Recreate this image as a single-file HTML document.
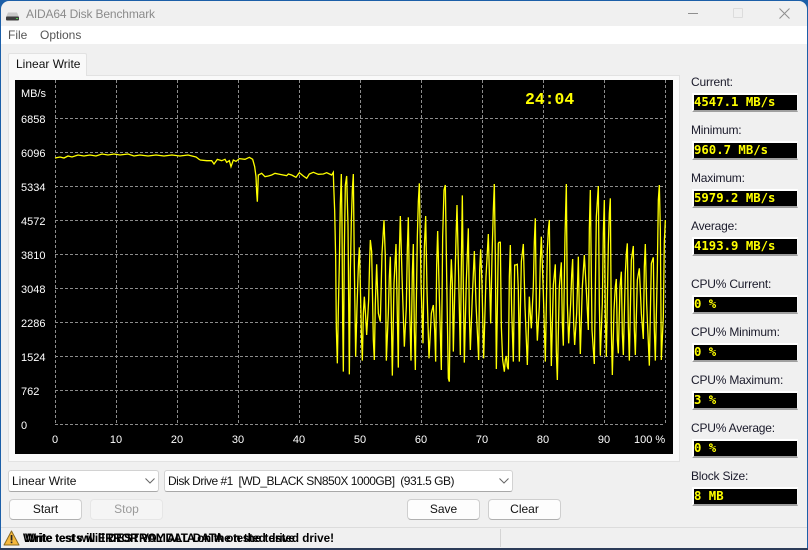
<!DOCTYPE html>
<html><head><meta charset="utf-8"><title>AIDA64 Disk Benchmark</title>
<style>
html,body{margin:0;padding:0;width:808px;height:550px;overflow:hidden;background:#1c5fa8}
body{position:relative;font-family:"Liberation Sans",sans-serif;font-size:12px;color:#111}
div{position:absolute;box-sizing:border-box;white-space:pre}
#win{left:1px;top:1px;width:806px;height:547px;background:#f0f0f0;border-radius:8px 8px 0 0;overflow:hidden}
#bot{left:0;top:548px;width:808px;height:2px;background:#2b3b58}
.abs{position:absolute}
.lbl{left:691px;color:#1a1a2a;font-size:12px;line-height:14px;letter-spacing:-.2px}
.val{left:692px;width:106px;height:19px;background:#000;border:2px solid #fff;border-bottom:2px solid #a0a0a0;border-right:1px solid #f6f6f6;color:#ff0;font:bold 12.3px/15px "DejaVu Sans Mono","Liberation Mono",monospace;padding-left:0}
.btn{height:21px;width:73px;background:#fdfdfd;border:1px solid #cfcfcf;border-bottom-color:#b0b0b0;border-radius:4px;text-align:center;line-height:19px;font-size:12px;color:#111}
.combo{height:22px;top:470px;background:#fff;border:1px solid #d2d2d2;border-bottom-color:#a8a8a8;border-radius:3px;line-height:20px;padding-left:3px;font-size:12px}
.warn{left:23px;top:532px;font-weight:bold;font-size:11.7px;line-height:14px;color:#000}
</style></head><body>
<div id="win"></div>
<div id="bot"></div>

<!-- title bar -->
<svg class="abs" style="left:5px;top:11px" width="16" height="10" viewBox="0 0 16 10"><path d="M3 1.5h9l2 4.5H1z" fill="#c9c9c9"/><rect x="1" y="5.5" width="13" height="4" rx="1" fill="#3e3e3e"/><rect x="11" y="7" width="2" height="1" fill="#4fd04f"/></svg>
<div style="left:26px;top:6px;font-size:12px;line-height:16px;color:#8b8b8b;letter-spacing:-.15px">AIDA64 Disk Benchmark</div>
<div style="left:688px;top:13px;width:10px;height:1px;background:#8f8f8f"></div>
<div style="left:733px;top:8px;width:10px;height:10px;border:1px solid #dcdcdc;border-radius:1px"></div>
<svg class="abs" style="left:779px;top:8px" width="11" height="11"><path d="M.5.5l10 10M10.5.5l-10 10" stroke="#8f8f8f" stroke-width="1" fill="none"/></svg>

<!-- menu -->
<div style="left:1px;top:26px;width:806px;height:18px;background:#fff"></div>
<div style="left:8px;top:28px;color:#555;line-height:15px">File</div>
<div style="left:40px;top:28px;color:#555;line-height:15px">Options</div>

<!-- panel and tab -->
<div style="left:8px;top:75px;width:672px;height:387px;background:#f9f9f9;border:1px solid #e2e2e2"></div>
<div style="left:8px;top:53px;width:79px;height:23px;background:#f9f9f9;border:1px solid #e2e2e2;border-bottom:0;border-radius:2px 2px 0 0;line-height:20px;padding-left:7px;color:#111">Linear Write</div>

<!-- chart -->
<svg class="abs" style="left:0;top:0" width="808" height="550" viewBox="0 0 808 550">
<rect x="15" y="80" width="658" height="374" fill="#000"/>
<g stroke="#8c8c8c" stroke-width="1" stroke-dasharray="3 2" fill="none">
<path d="M55.5 80V424M116.5 80V424M177.5 80V424M238.5 80V424M299.5 80V424M360.5 80V424M421.5 80V424M482.5 80V424M543.5 80V424M604.5 80V424M665.5 80V424"/>
<path d="M55 118.5H665M55 152.5H665M55 186.5H665M55 220.5H665M55 254.5H665M55 288.5H665M55 322.5H665M55 356.5H665M55 390.5H665M55 424.5H665"/>
</g>
<g fill="#fff" font-family="'Liberation Sans',sans-serif" font-size="11">
<text x="21" y="97">MB/s</text>
<text x="21" y="123">6858</text><text x="21" y="157">6096</text><text x="21" y="191">5334</text><text x="21" y="225">4572</text><text x="21" y="259">3810</text><text x="21" y="293">3048</text><text x="21" y="327">2286</text><text x="21" y="361">1524</text><text x="21" y="395">762</text><text x="21" y="429">0</text>
<g text-anchor="middle"><text x="55" y="443">0</text><text x="116" y="443">10</text><text x="177" y="443">20</text><text x="238" y="443">30</text><text x="299" y="443">40</text><text x="360" y="443">50</text><text x="421" y="443">60</text><text x="482" y="443">70</text><text x="543" y="443">80</text><text x="604" y="443">90</text></g>
<text x="634" y="443">100 %</text>
</g>
<text x="525" y="104" fill="#ff0" font-family="'Liberation Mono',monospace" font-weight="bold" font-size="16.4">24:04</text>
<g fill="none" stroke="#ff0" stroke-width="1.3" stroke-linejoin="miter">
<polyline points="55,158 60,157 64,158 68,156 72,157 78,155 84,156 90,155 96,156 102,154 108,155 114,154 120,155 128,154 134,156 140,155 148,156 156,155 164,156 172,155 180,156 188,155 196,157 200,160"/>
<polyline transform="translate(200,130) scale(.33333)" stroke-width="3.9" points="0,90 20,92 35,92 42,102 52,88 65,92 75,88 80,97 88,92 93,110 100,90 108,94 118,86 135,88 148,82 158,88 164,110 168,140 170,187 172,215 175,135 185,130 195,140 205,138 215,135 225,130 240,133 260,137 265,132 275,135 288,142 298,128 310,138 320,145 328,132 340,127 355,133 370,132 380,128 395,135 400,127 401,165"/>
<polyline transform="translate(320,170) scale(.33333)" stroke-width="3.9" points="41,45 44,122 47,265 49,475 52,580 55,420 58,282 61,100 64,12 66,160 68,455 70,605 73,240 76,45 80,18 84,165 88,613 91,305 94,155 97,60 100,12 103,290 107,560 111,410 115,290 118,232 121,345 124,485 127,572 130,430 133,380 137,440 140,495 146,390 149,270 151,210 155,245 160,510 163,570 166,400 170,283 175,430 181,455 186,250 192,150 196,260 199,572 205,430 208,320 211,260 214,440 217,617 222,340 228,222 232,440 235,593 238,250 241,138 247,350 253,530 259,410 262,235 265,142 269,420 273,572 277,310 280,222 283,480 286,600 292,200 295,95 298,40 303,340 309,520 313,235 317,138 321,360 327,565 334,430 340,405 344,480 347,575 350,285 353,183 358,380 364,600 368,200 372,60 376,45 380,320 385,625 388,635 391,360 394,268 397,340 400,545 405,330 408,205 411,105 416,320 421,555 424,285 427,76 430,350 433,578 439,330 445,175 448,430 451,540 457,380 463,243 468,400 476,570 479,300 482,238 486,345 491,565 498,320 505,192 512,460 516,260 520,120 523,42"/>
<polyline transform="translate(490,170) scale(.33333)" stroke-width="3.9" points="13,42 16,260 19,597 22,420 25,220 27,217 31,217 34,470 38,570 43,605 46,570 49,558 52,590 55,598 58,320 61,225 65,420 70,575 74,285 77,285 82,283 85,360 88,575 94,275 100,222 105,410 112,585 118,380 121,430 124,475 130,350 133,215 136,145 139,420 142,512 148,410 151,270 154,200 160,370 166,575 172,240 175,180 178,150 181,420 184,588 190,345 196,283 199,545 202,630 208,350 214,277 217,460 220,527 225,200 229,42 232,400 236,520 242,400 245,315 248,267 251,460 254,525 260,430 265,260 268,430 271,552 277,350 283,255 289,360 295,480 298,175 301,60 306,480 313,582 319,140 325,48 328,400 331,557 337,400 340,190 343,90 346,440 349,560 355,225 358,130 361,85 364,480 367,615 372,420 376,350 379,327 382,510 385,550 390,350 394,305 397,490 400,555 406,310 409,250 412,220 415,470 418,572 424,270 430,228 433,480 436,555 442,330 448,295 454,430 460,507 463,290 466,222 470,400 478,587 484,280 490,262 493,480 496,572 502,300 505,90 508,45 511,180 514,570 520,440 523,215 526,150"/>
</g>
</svg>

<!-- right column -->
<div class="lbl" style="top:75px">Current:</div><div class="val" style="top:93px">4547.1 MB/s</div>
<div class="lbl" style="top:123px">Minimum:</div><div class="val" style="top:141px">960.7 MB/s</div>
<div class="lbl" style="top:171px">Maximum:</div><div class="val" style="top:189px">5979.2 MB/s</div>
<div class="lbl" style="top:219px">Average:</div><div class="val" style="top:237px">4193.9 MB/s</div>
<div class="lbl" style="top:277px">CPU% Current:</div><div class="val" style="top:295px">0 %</div>
<div class="lbl" style="top:325px">CPU% Minimum:</div><div class="val" style="top:343px">0 %</div>
<div class="lbl" style="top:373px">CPU% Maximum:</div><div class="val" style="top:391px">3 %</div>
<div class="lbl" style="top:421px">CPU% Average:</div><div class="val" style="top:439px">0 %</div>
<div class="lbl" style="top:469px">Block Size:</div><div class="val" style="top:487px">8 MB</div>

<!-- combos -->
<div class="combo" style="left:8px;width:151px">Linear Write</div>
<svg class="abs" style="left:145px;top:478px" width="10" height="6"><path d="M.5.5L5 5 9.5.5" stroke="#666" fill="none"/></svg>
<div class="combo" style="left:164px;width:349px;letter-spacing:-.5px">Disk Drive #1  [WD_BLACK SN850X 1000GB]  (931.5 GB)</div>
<svg class="abs" style="left:499px;top:478px" width="10" height="6"><path d="M.5.5L5 5 9.5.5" stroke="#666" fill="none"/></svg>

<!-- buttons -->
<div class="btn" style="left:9px;top:499px">Start</div>
<div class="btn" style="left:90px;top:499px;background:#f5f5f5;border-color:#e6e6e6;color:#9a9a9a">Stop</div>
<div class="btn" style="left:407px;top:499px">Save</div>
<div class="btn" style="left:488px;top:499px">Clear</div>

<!-- status -->
<div style="left:1px;top:527px;width:806px;height:1px;background:#dcdcdc"></div>
<div style="left:500px;top:529px;width:1px;height:18px;background:#d4d4d4"></div>
<svg class="abs" style="left:3px;top:530px" width="17" height="16" viewBox="0 0 17 16"><path d="M8.5 1L16 15H1z" fill="#f5b83d" stroke="#8a6a20" stroke-width="1" stroke-linejoin="round"/><rect x="7.7" y="5" width="1.7" height="5.5" fill="#222"/><rect x="7.7" y="11.5" width="1.7" height="1.7" fill="#222"/></svg>
<div class="warn">Write tests will DESTROY ALL DATA on the tested drive!</div>
<div class="warn" style="left:25px;letter-spacing:-.35px">Write test will ERROR VALIDATA on the tested drive</div>
</body></html>
